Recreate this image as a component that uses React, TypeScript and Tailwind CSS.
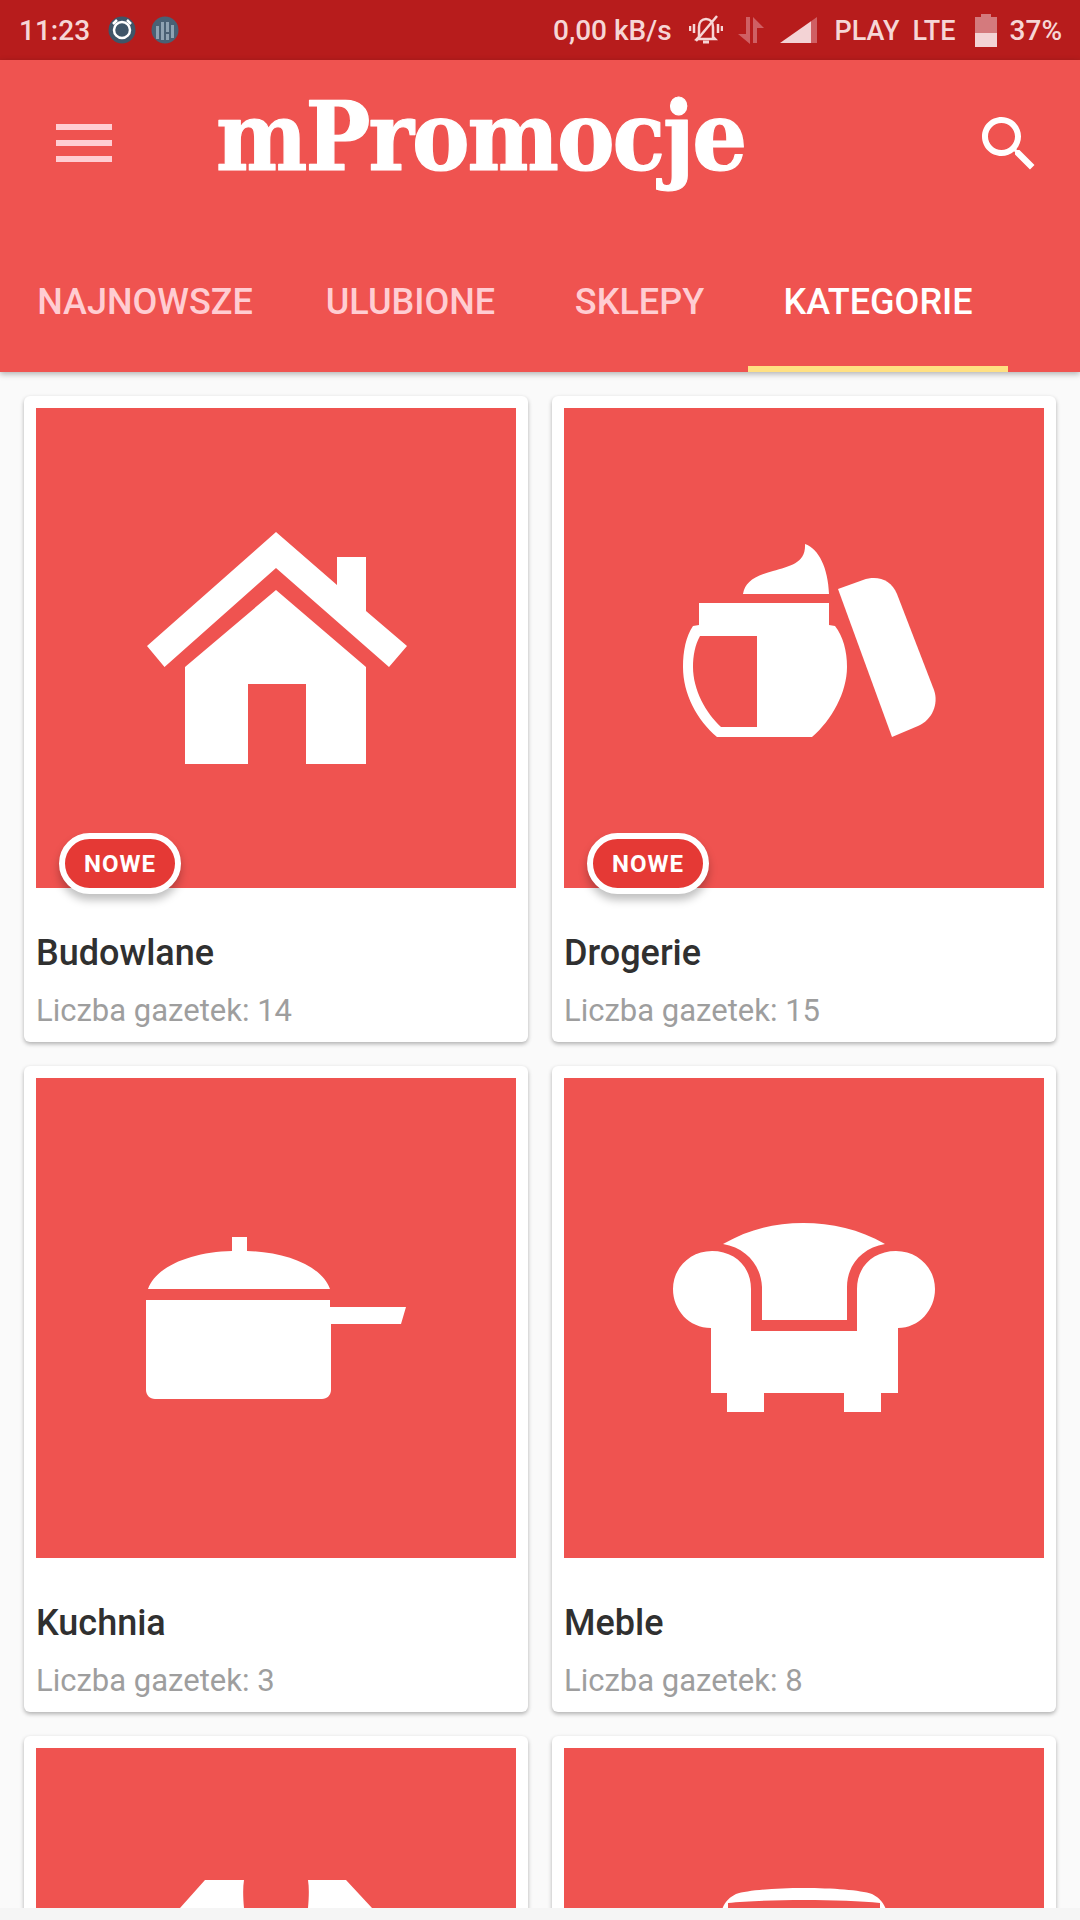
import React from 'react';

const ROBOTO = 'font-["Roboto",sans-serif]';

const HouseIcon = () => (
    <path d="M240 124 L301 177 V149 H330 V203 L371 238 L353 259 L240 160 L128.5 259 L111 238 Z M240 182 L330 259 V356 H270 V276 H212 V356 H149 V259 Z" />
);

const JarIcon = () => (
    <>
        <path d="M179 186 C181 174 190 168 209 163 C226 158 242 155 241 136 C255 141 264 160 265 186 Z" />
        <path fillRule="evenodd" d="M135 195 H265 V217 L271 218 C279 228 283 243 283 259 C283 284 268 312 248 329 H153 C133 312 119 286 119 259 C119 243 122 228 129 218 L135 217 Z M136 228 H193 V319 H157 C142 305 129 282 129 259 C129 248 131 237 136 228 Z" />
        <path d="M274 181 L299 172 C314 167 327 172 333 186 L370 282 C375 296 368 312 354 318 L328 329 Z" />
    </>
);

const PotIcon = () => (
    <path d="M196 159 H211 V173 C250 174 286 188 294 211 H112 C120 188 156 174 196 173 Z M110 222 H294 V229 H370 L365 246 H295 V312 C295 317 291 321 286 321 H119 C114 321 110 317 110 312 Z" />
);

const SofaIcon = () => (
    <path d="M159 166 C185 151 211 145 239 145 C268 145 295 151 321 166 C298 170 283 187 283 209 V242 H198 V209 C197 187 182 170 159 166 Z M147 250 C125 250 109 232 109 211 C109 190 126 173 148 173 C170 173 187 188 187 211 V253 H293 V211 C293 188 310 173 332 173 C354 173 371 190 371 211 C371 232 355 250 334 250 V315 H317 V334 H280 V315 H200 V334 H163 V315 H147 Z" />
);

const ShirtIcon = () => (
    <path d="M169 132 H208 C206 145 208 160 210 180 H130 L144 160 Z M272 132 H310 L336 160 L350 180 H270 C272 160 274 145 272 132 Z" />
);

const CupIcon = () => (
    <path fillRule="evenodd" d="M172 146 C195 138 285 138 308 146 C316 150 322 156 324 170 H156 C158 156 164 150 172 146 Z M164 155 V170 H316 V155 C280 151 200 151 164 155 Z" />
);

type Category = { name?: string; count?: number; isNew?: boolean; icon: React.ReactNode };

// the last row is cut by the bottom of the screen, its labels are never visible
const categories: Category[] = [
    { name: 'Budowlane', count: 14, isNew: true, icon: <HouseIcon /> },
    { name: 'Drogerie', count: 15, isNew: true, icon: <JarIcon /> },
    { name: 'Kuchnia', count: 3, icon: <PotIcon /> },
    { name: 'Meble', count: 8, icon: <SofaIcon /> },
    { icon: <ShirtIcon /> },
    { icon: <CupIcon /> },
];

const tabs = [
    { label: 'NAJNOWSZE', width: 'w-[290px]', active: false },
    { label: 'ULUBIONE', width: 'w-[241px]', active: false },
    { label: 'SKLEPY', width: 'w-[217px]', active: false },
    { label: 'KATEGORIE', width: 'w-[260px]', active: true },
];

const StatusBar = () => (
    <div className="flex items-center h-[60px] bg-[#b71c1c] text-[#f6d6d6] text-[28px] font-medium leading-none shrink-0">
        <span className="ml-[19px] w-[71px] pt-[2px]">11:23</span>
        <svg className="ml-[18px]" width="28" height="28" viewBox="0 0 28 28">
            <circle cx="14" cy="14" r="13.5" fill="#3f5568" />
            <circle cx="14" cy="14" r="8" fill="none" stroke="#fff" strokeWidth="2.5" />
            <path d="M14 10 V14.5 H17" fill="none" stroke="#3f5568" strokeWidth="2" />
            <path d="M5 8 L9 4 M23 8 L19 4" stroke="#fff" strokeWidth="2.5" />
        </svg>
        <svg className="ml-[15px]" width="28" height="28" viewBox="0 0 28 28">
            <circle cx="14" cy="14" r="13.5" fill="#4a6175" />
            <path d="M5 10 H8 V23 H5 Z M10 6 H13 V24 H10 Z M15 6 H18 V16 H15 Z M15 18 H18 V24 H15 Z M20 9 H23 V22 H20 Z" fill="#8fa3b3" />
        </svg>
        <span className="ml-auto pt-[2px]">0,00 kB/s</span>
        <svg className="ml-[17px]" width="34" height="32" viewBox="0 0 34 32" fill="none" stroke="#f6d6d6" strokeWidth="2.5">
            <path d="M10 23 V13 C10 8 13 5 17 5 C21 5 24 8 24 13 V23 L26 25 H8 Z" />
            <path d="M14 28 H20" strokeWidth="3" />
            <path d="M5 10 V19 M1 12 V17 M29 10 V19 M33 12 V17" strokeWidth="2.5" />
            <path d="M7 27 L28 2" strokeWidth="2.5" stroke="#f6d6d6" />
        </svg>
        <svg className="ml-[15px]" width="26" height="27" viewBox="0 0 26 27" fill="#cf5f63">
            <path d="M8 0 H12 V27 L0 17 H8 Z M15 0 L26 11 H19 V26 H15 Z" />
        </svg>
        <svg className="ml-[16px]" width="37" height="26" viewBox="0 0 37 26">
            <path d="M0 26 L31 4.2 V26 Z" fill="#f3d3d5" />
            <path d="M31 4.2 L37 0 V26 H31 Z" fill="#cf5f63" />
        </svg>
        <span className="ml-[18px] w-[65px] text-[27px] pt-[2px]">PLAY</span>
        <span className="ml-[13px] w-[44px] text-[27px] pt-[2px]">LTE</span>
        <div className="ml-[18px] flex flex-col items-center w-[22px] h-[33px]">
            <div className="w-[10px] h-[3px] bg-[#d47a7d]" />
            <div className="w-full h-[16px] bg-[#d47a7d]" />
            <div className="w-full h-[14px] bg-[#f3d3d5]" />
        </div>
        <span className="ml-[13px] mr-[18px] pt-[2px]">37%</span>
    </div>
);

const Header = () => (
    <header className="relative z-10 bg-[#ef5350] shadow-[0_2px_6px_rgba(0,0,0,0.3)] shrink-0">
        <div className="flex items-start h-[168px]">
            <div className="ml-[56px] mt-[64px] w-[56px] flex flex-col gap-[10px]">
                <div className="h-[6px] bg-[#ffcdd2]" />
                <div className="h-[6px] bg-[#ffcdd2]" />
                <div className="h-[6px] bg-[#ffcdd2]" />
            </div>
            {/* logo: no matching rounded slab installed, a thin round-joined stroke gets close */}
            <svg className="ml-[88px] mt-[16px]" width="580" height="136" viewBox="0 0 580 136">
                <text
                    x="16"
                    y="94"
                    fontFamily="'DejaVu Serif Condensed','DejaVu Serif',serif"
                    fontWeight="700"
                    fontSize="96"
                    letterSpacing="-2"
                    fill="#fff"
                    stroke="#fff"
                    strokeWidth="1.2"
                    strokeLinejoin="round"
                >
                    mPromocje
                </text>
            </svg>
            <svg className="ml-auto mr-[35px] mt-[48px]" width="72" height="72" viewBox="0 0 24 24" fill="#fff">
                <path d="M15.5 14h-.79l-.28-.27C15.41 12.59 16 11.11 16 9.5 16 5.91 13.09 3 9.5 3S3 5.91 3 9.5 5.91 16 9.5 16c1.61 0 3.09-.59 4.23-1.57l.27.28v.79l5 4.99L20.49 19l-4.99-5zm-6 0C7.01 14 5 11.99 5 9.5S7.01 5 9.5 5 14 7.01 14 9.5 11.99 14 9.5 14z" />
            </svg>
        </div>
        <nav className="flex h-[144px]">
            {tabs.map((tab) => (
                <div
                    key={tab.label}
                    className={`${tab.width} flex items-center justify-center pt-[10px] border-b-[6px] text-[36px] font-medium ${tab.active ? 'text-white border-[#ffe082]' : 'text-[#ffcdd2] border-transparent'}`}
                >
                    {tab.label}
                </div>
            ))}
        </nav>
    </header>
);

const CategoryCard = ({ name, count, isNew, icon }: Category) => (
    <div className="bg-white rounded-[6px] shadow-[0_2px_4px_rgba(0,0,0,0.3)] p-[12px] h-[646px]">
        <div className="relative h-[480px] bg-[#ef5350]">
            <svg className="block" width="480" height="480" viewBox="0 0 480 480" fill="#fff">
                {icon}
            </svg>
            {isNew && (
                <div className="absolute left-[23px] top-[425px] w-[122px] h-[61px] flex items-center justify-center rounded-full border-[6px] border-white bg-[#e53935] text-white text-[24px] font-bold tracking-[1px] shadow-[0_6px_8px_rgba(0,0,0,0.25)]">
                    NOWE
                </div>
            )}
        </div>
        {name && (
            <>
                <h3 className="mt-[45px] text-[36px] leading-[40px] font-medium text-[#303030]">{name}</h3>
                <p className="mt-[20px] text-[31px] leading-[36px] text-[#9e9e9e]">Liczba gazetek: {count}</p>
            </>
        )}
    </div>
);

const App: React.FC = () => {
    return (
        <div className={`flex flex-col w-[1080px] h-[1920px] overflow-hidden bg-[#fafafa] ${ROBOTO}`}>
            <StatusBar />
            <Header />
            <main className="h-[1536px] overflow-hidden shrink-0">
                <div className="grid grid-cols-2 gap-[24px] px-[24px] pt-[24px]">
                    {categories.map((c, i) => (
                        <CategoryCard key={i} {...c} />
                    ))}
                </div>
            </main>
            <div className="h-[12px] bg-[#f5f5f5]" />
        </div>
    );
};

export default App;
